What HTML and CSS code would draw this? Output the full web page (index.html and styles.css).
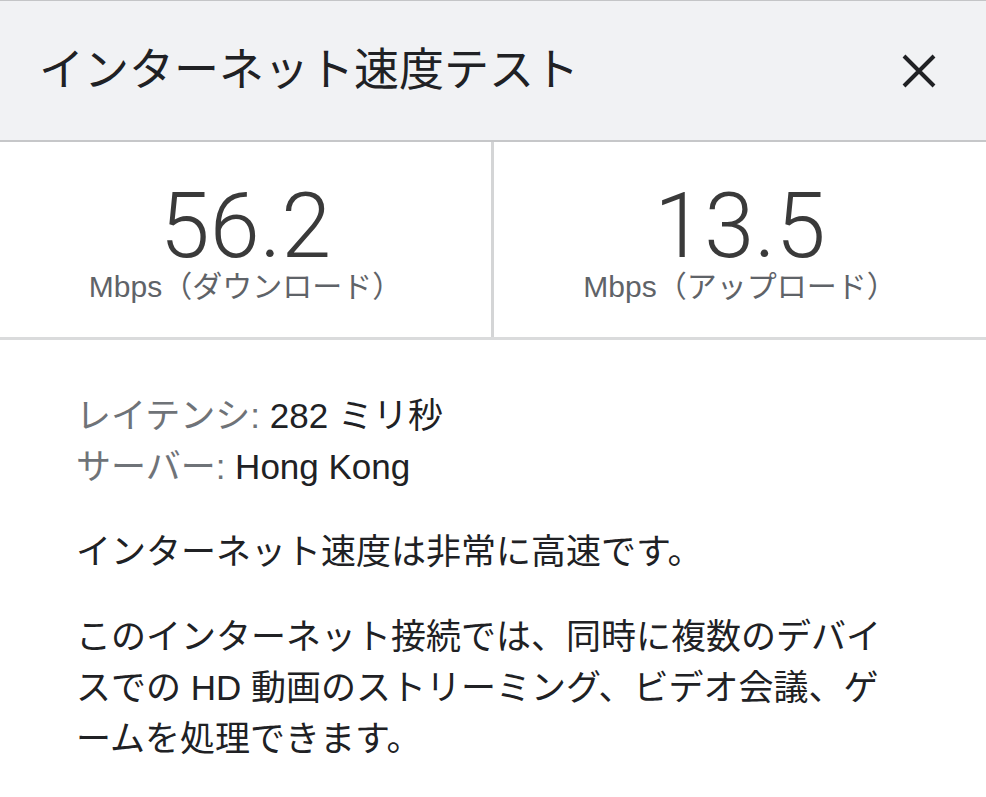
FILE: index.html
```html
<!DOCTYPE html>
<html lang="ja">
<head>
<meta charset="utf-8">
<title>インターネット速度テスト</title>
<link rel="stylesheet" href="styles.css">
</head>
<body>
<div class="panel">
  <header class="header">
    <h1 class="title">インターネット速度テスト</h1>
    <button class="close" aria-label="閉じる">
      <svg width="34" height="34" viewBox="0 0 34 34"><path d="M2 2 L32 32 M32 2 L2 32" stroke="#202124" stroke-width="4" fill="none"/></svg>
    </button>
  </header>
  <section class="stats">
    <div class="stat">
      <div class="value">56.2</div>
      <div class="unit">Mbps（ダウンロード）</div>
    </div>
    <div class="stat">
      <div class="value">13.5</div>
      <div class="unit">Mbps（アップロード）</div>
    </div>
  </section>
  <section class="details">
    <div class="meta">
      <div class="meta-row"><span class="meta-label">レイテンシ:</span> 282 ミリ秒</div>
      <div class="meta-row"><span class="meta-label">サーバー:</span> Hong Kong</div>
    </div>
    <p class="para">インターネット速度は非常に高速です。</p>
    <p class="para">このインターネット接続では、同時に複数のデバイスでの HD 動画のストリーミング、ビデオ会議、ゲームを処理できます。</p>
  </section>
</div>
</body>
</html>
```
FILE: styles.css
```css
html, body {
  margin: 0;
  padding: 0;
  background: #ffffff;
}
body {
  font-family: "Liberation Sans", "Noto Sans CJK JP", sans-serif;
  color: #202124;
}
.panel {
  width: 986px;
}
.header {
  display: flex;
  align-items: center;
  justify-content: space-between;
  height: 139px;
  background: #f1f2f4;
  border-top: 1px solid #c4c5c7;
  border-bottom: 2px solid #c6c7c9;
  padding: 0 50px 0 39px;
}
.title {
  margin: 0;
  font-size: 45px;
  font-weight: 400;
  line-height: 1;
  color: #202124;
}
.close {
  border: 0;
  background: none;
  padding: 0;
  width: 34px;
  height: 34px;
  display: flex;
}
.stats {
  display: grid;
  grid-template-columns: 491px 3px 1fr;
  height: 195px;
  border-bottom: 3px solid #dadbdc;
}
.stat {
  display: flex;
  flex-direction: column;
  align-items: center;
  padding-top: 41px;
}
.stat + .stat {
  grid-column: 3;
  border-left: 3px solid #d4d5d6;
  margin-left: -3px;
}
.value {
  font-family: Roboto, "Liberation Sans", sans-serif;
  font-weight: 300;
  font-size: 90px;
  line-height: 88px;
  color: #3a3a3a;
}
.unit {
  font-size: 30px;
  line-height: 32px;
  color: #5f6368;
}
.details {
  padding: 50px 76px 0 76px;
}
.meta-row {
  font-size: 35px;
  line-height: 51px;
  color: #202124;
}
.meta-label {
  color: #6f7378;
}
.para {
  margin: 34px 0 0 0;
  font-size: 35px;
  line-height: 51px;
  color: #202124;
}
```
